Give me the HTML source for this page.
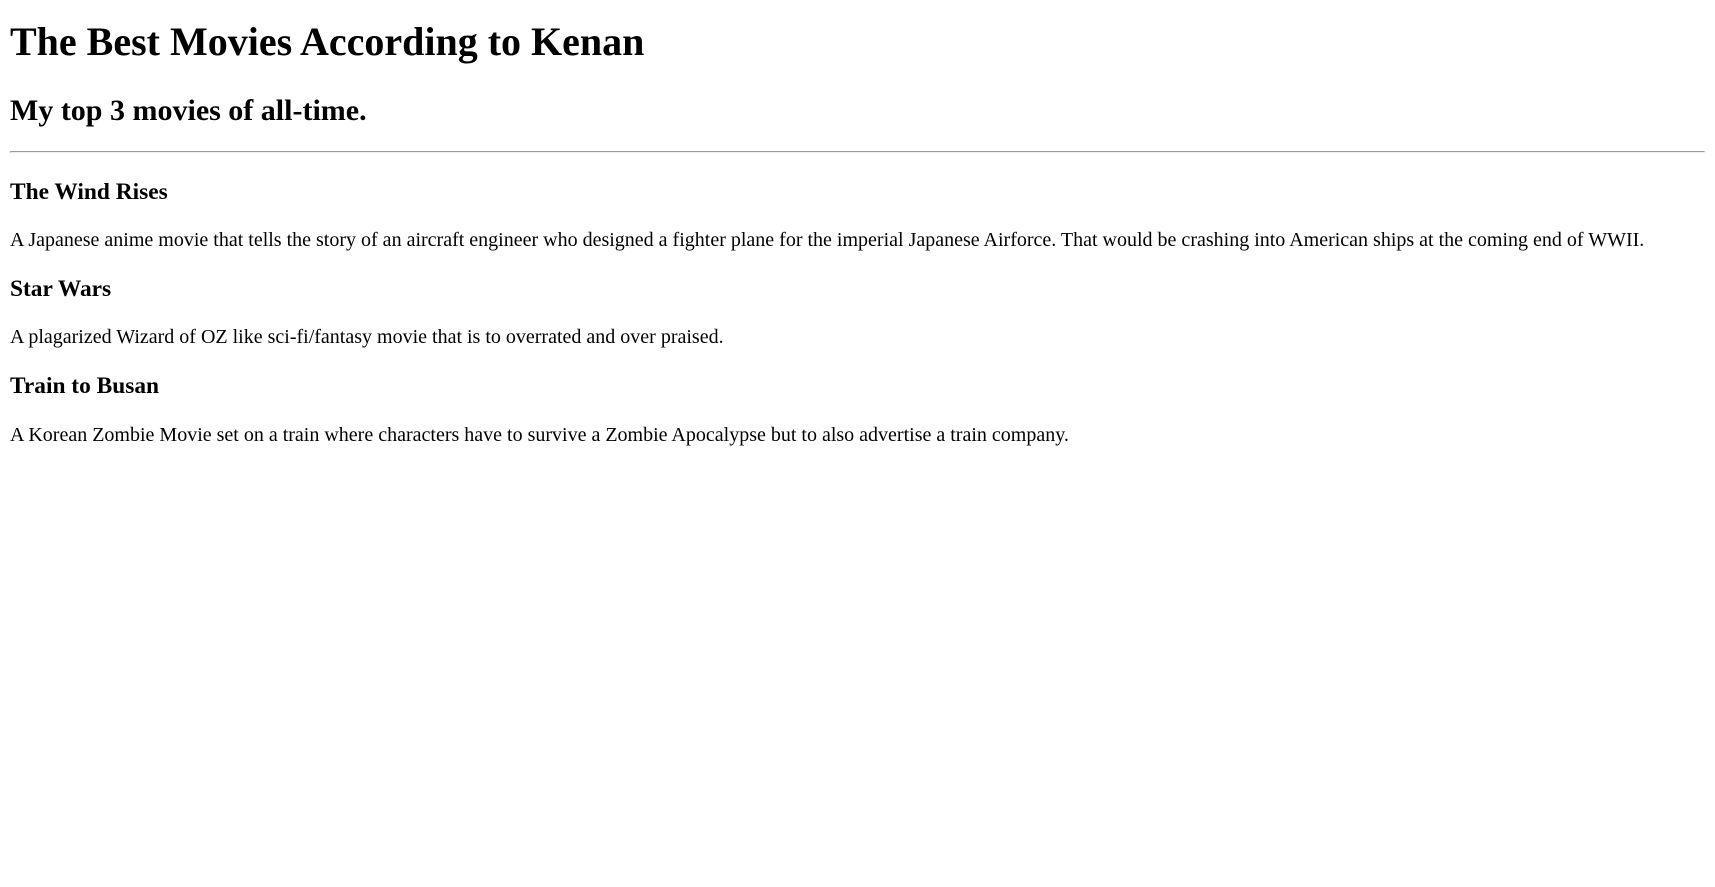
<!DOCTYPE html>
<html><head><meta charset="utf-8"><style>
html{zoom:1.25;}
body{font-family:"Liberation Serif",serif;margin:8px;color:#000;background:#fff;}
h1{margin:16px 0 23px;line-height:1.12;}
h2{margin:0.78em 0;line-height:1.12;}
h3{margin:18px 0;line-height:1.2;}
p{margin:16px 0;line-height:1.2;}
hr{margin:7px 0 0;}
.sp{height:2.2px;}
</style></head><body>
<h1>The Best Movies According to Kenan</h1>
<h2>My top 3 movies of all-time.</h2>
<hr>
<div class="sp"></div>
<h3>The Wind Rises</h3>
<p>A Japanese anime movie that tells the story of an aircraft engineer who designed a fighter plane for the imperial Japanese Airforce. That would be crashing into American ships at the coming end of WWII.</p>
<h3>Star Wars</h3>
<p>A plagarized Wizard of OZ like sci-fi/fantasy movie that is to overrated and over praised.</p>
<h3>Train to Busan</h3>
<p>A Korean Zombie Movie set on a train where characters have to survive a Zombie Apocalypse but to also advertise a train company.</p>
</body></html>
